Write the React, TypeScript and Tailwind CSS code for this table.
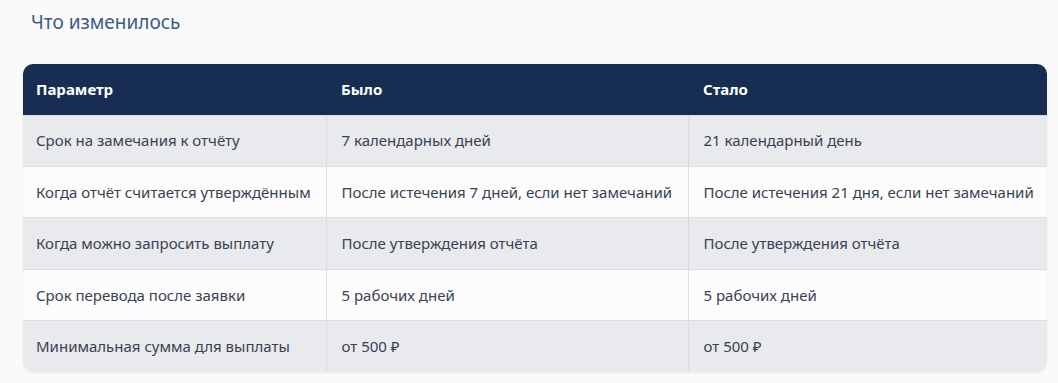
const rows = [
  ["Срок на замечания к отчёту", "7 календарных дней", "21 календарный день"],
  [
    "Когда отчёт считается утверждённым",
    "После истечения 7 дней, если нет замечаний",
    "После истечения 21 дня, если нет замечаний",
  ],
  ["Когда можно запросить выплату", "После утверждения отчёта", "После утверждения отчёта"],
  ["Срок перевода после заявки", "5 рабочих дней", "5 рабочих дней"],
  ["Минимальная сумма для выплаты", "от 500 ₽", "от 500 ₽"],
];

export default function App() {
  return (
    <div
      className="min-h-screen bg-[#fafafa] pt-[9px] pl-[23px] pr-[11px]"
      style={{ fontFamily: "'Noto Sans', sans-serif" }}
    >
      <h2 className="pl-[8px] text-[19px] leading-[26px] font-normal text-[#3d5a86]">
        Что изменилось
      </h2>

      <div className="mt-[29px] overflow-hidden rounded-[10px] shadow-[0_1px_3px_rgba(0,0,0,0.06)]">
        <table className="w-full table-fixed border-collapse text-left text-[15px]">
          <colgroup>
            <col className="w-[303px]" />
            <col className="w-[362px]" />
            <col />
          </colgroup>
          <thead>
            <tr className="h-[51px] bg-[#172d52] text-white">
              <th className="px-[13px] font-bold">Параметр</th>
              <th className="px-[15px] font-bold">Было</th>
              <th className="px-[15px] font-bold">Стало</th>
            </tr>
          </thead>
          <tbody>
            {rows.map((row, i) => (
              <tr
                key={i}
                className={
                  "h-[51.4px] border-t border-[#d9dde3] text-[#3a4252] " +
                  (i % 2 === 0 ? "bg-[#e8eaed]" : "bg-[#fcfcfd]")
                }
              >
                <td className="px-[13px] whitespace-nowrap">{row[0]}</td>
                <td className="border-l border-[#d9dde3] px-[15px] whitespace-nowrap">{row[1]}</td>
                <td className="border-l border-[#d9dde3] px-[15px] whitespace-nowrap">{row[2]}</td>
              </tr>
            ))}
          </tbody>
        </table>
      </div>
    </div>
  );
}
